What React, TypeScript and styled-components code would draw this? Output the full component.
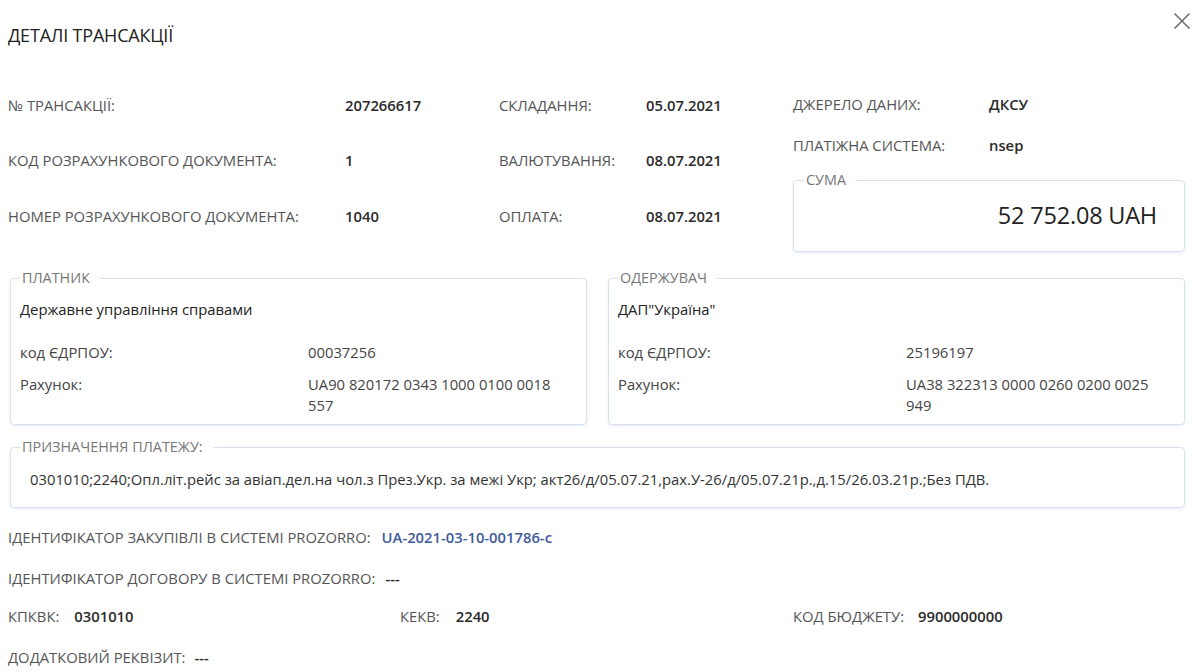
import React from 'react';
import styled, { createGlobalStyle } from 'styled-components';

const GlobalStyle = createGlobalStyle`
  html, body {
    margin: 0;
    padding: 0;
    background: #ffffff;
  }
  body {
    font-family: 'Open Sans', 'Noto Sans', sans-serif;
    font-size: 14.8px;
    color: #222222;
  }
`;

const Page = styled.div`
  width: 1200px;
  height: 672px;
  box-sizing: border-box;
  padding: 0 15px 0 8px;
  overflow: hidden;
`;

const Header = styled.header`
  display: flex;
  align-items: center;
  justify-content: space-between;
  height: 70px;
`;

const Title = styled.h1`
  margin: 0;
  font-size: 18px;
  font-weight: 400;
  color: #222222;
  letter-spacing: -0.2px;
`;

const CloseButton = styled.button`
  display: flex;
  align-items: center;
  justify-content: center;
  width: 20px;
  height: 20px;
  margin: -28px -7px 0 0;
  padding: 0;
  border: none;
  background: none;
  cursor: pointer;
  color: #707070;
`;

const TopSection = styled.div`
  display: flex;
  margin-top: 7px;
`;

const MainGrid = styled.div`
  display: grid;
  grid-template-columns: 491px 294px;
  grid-auto-rows: 55.5px;
  align-items: center;
`;

const Pair = styled.div<{ $labelWidth: number }>`
  display: grid;
  grid-template-columns: ${(p) => p.$labelWidth}px 1fr;
  align-items: center;
  line-height: 20px;
`;

const Label = styled.span`
  color: #555555;
  text-transform: uppercase;
  white-space: nowrap;
`;

const Value = styled.span`
  color: #2a2a2a;
  font-weight: 600;
`;

const SideColumn = styled.div`
  flex: 1;
  display: flex;
  flex-direction: column;
  padding-top: 17px;
  gap: 21px;
`;

const Box = styled.fieldset<{ $padX: number }>`
  margin: 0;
  padding: 0 ${(p) => p.$padX}px;
  border: 1px solid #d8e1ef;
  border-radius: 4px;
  box-shadow: 0 1px 3px rgba(80, 110, 160, 0.12);
  min-width: 0;
`;

const Legend = styled.legend<{ $shift: number }>`
  margin-left: ${(p) => p.$shift}px;
  padding: 0 10px 0 2px;
  font-size: 14.4px;
  line-height: 20px;
  color: #777777;
  text-transform: uppercase;
`;

const SumBox = styled(Box)`
  margin-top: -6px;
`;

const SumText = styled.div`
  margin-top: 10px;
  padding: 0 17px 21px 0;
  text-align: right;
  font-size: 23.5px;
  line-height: 30px;
  color: #222222;
  letter-spacing: -0.2px;
`;

const PartiesRow = styled.div`
  display: grid;
  grid-template-columns: 1fr 1fr;
  gap: 21px;
  margin: 16px 0 0 2px;
`;

const PartyName = styled.div`
  margin-top: 11px;
  line-height: 20px;
  font-weight: 500;
  color: #222222;
`;

const PartyTable = styled.div`
  display: grid;
  grid-template-columns: 288px 262px;
  row-gap: 11px;
  margin: 23px 0 8px;
  line-height: 21px;
  color: #444444;
`;

const PurposeBox = styled(Box)`
  margin: 12px 0 0 2px;
`;

const PurposeText = styled.div`
  padding: 12px 0 18px;
  line-height: 20px;
  color: #333333;
`;

const InfoRow = styled.div<{ $top: number; $gap: number }>`
  display: flex;
  align-items: center;
  gap: ${(p) => p.$gap}px;
  margin-top: ${(p) => p.$top}px;
  line-height: 20px;
`;

const InfoGrid = styled.div<{ $top: number }>`
  display: grid;
  grid-template-columns: 392px 393px 1fr;
  margin-top: ${(p) => p.$top}px;
  line-height: 20px;
`;

const InfoCell = styled.div<{ $gap: number }>`
  display: flex;
  align-items: center;
  gap: ${(p) => p.$gap}px;
`;

const Link = styled.a`
  color: #3f5b9b;
  font-weight: 600;
  text-decoration: none;
`;

const CloseIcon = () => (
  <svg width="18" height="18" viewBox="0 0 18 18" fill="none" stroke="currentColor" strokeWidth="1.6">
    <path d="M1.5 1.5 L16.5 16.5 M16.5 1.5 L1.5 16.5" />
  </svg>
);

const parties = [
  {
    title: 'Платник',
    name: 'Державне управління справами',
    code: '00037256',
    account: 'UA90 820172 0343 1000 0100 0018 557',
  },
  {
    title: 'Одержувач',
    name: 'ДАП"Україна"',
    code: '25196197',
    account: 'UA38 322313 0000 0260 0200 0025 949',
  },
];

export default function App() {
  return (
    <>
      <GlobalStyle />
      <Page>
        <Header>
          <Title>ДЕТАЛІ ТРАНСАКЦІЇ</Title>
          <CloseButton aria-label="close">
            <CloseIcon />
          </CloseButton>
        </Header>

        <TopSection>
          <MainGrid>
            <Pair $labelWidth={337}>
              <Label>№ трансакції:</Label>
              <Value>207266617</Value>
            </Pair>
            <Pair $labelWidth={147}>
              <Label>Складання:</Label>
              <Value>05.07.2021</Value>
            </Pair>
            <Pair $labelWidth={337}>
              <Label>Код розрахункового документа:</Label>
              <Value>1</Value>
            </Pair>
            <Pair $labelWidth={147}>
              <Label>Валютування:</Label>
              <Value>08.07.2021</Value>
            </Pair>
            <Pair $labelWidth={337}>
              <Label>Номер розрахункового документа:</Label>
              <Value>1040</Value>
            </Pair>
            <Pair $labelWidth={147}>
              <Label>Оплата:</Label>
              <Value>08.07.2021</Value>
            </Pair>
          </MainGrid>

          <SideColumn>
            <Pair $labelWidth={196}>
              <Label>Джерело даних:</Label>
              <Value>ДКСУ</Value>
            </Pair>
            <Pair $labelWidth={196}>
              <Label>Платіжна система:</Label>
              <Value>nsep</Value>
            </Pair>
            <SumBox $padX={10}>
              <Legend $shift={0}>Сума</Legend>
              <SumText>52 752.08 UAH</SumText>
            </SumBox>
          </SideColumn>
        </TopSection>

        <PartiesRow>
          {parties.map((p) => (
            <Box key={p.title} $padX={9}>
              <Legend $shift={0}>{p.title}</Legend>
              <PartyName>{p.name}</PartyName>
              <PartyTable>
                <span>код ЄДРПОУ:</span>
                <span>{p.code}</span>
                <span>Рахунок:</span>
                <span>{p.account}</span>
              </PartyTable>
            </Box>
          ))}
        </PartiesRow>

        <PurposeBox $padX={19}>
          <Legend $shift={-10}>Призначення платежу:</Legend>
          <PurposeText>
            0301010;2240;Опл.літ.рейс за авіап.дел.на чол.з През.Укр. за межі Укр; акт26/д/05.07.21,рах.У-26/д/05.07.21р.,д.15/26.03.21р.;Без ПДВ.
          </PurposeText>
        </PurposeBox>

        <InfoRow $top={19} $gap={11}>
          <Label>Ідентифікатор закупівлі в системі Prozorro:</Label>
          <Link href="#">UA-2021-03-10-001786-c</Link>
        </InfoRow>
        <InfoRow $top={21} $gap={10}>
          <Label>Ідентифікатор договору в системі Prozorro:</Label>
          <Value>---</Value>
        </InfoRow>
        <InfoGrid $top={18}>
          <InfoCell $gap={15}>
            <Label>КПКВК:</Label>
            <Value>0301010</Value>
          </InfoCell>
          <InfoCell $gap={16}>
            <Label>КЕКВ:</Label>
            <Value>2240</Value>
          </InfoCell>
          <InfoCell $gap={14}>
            <Label>Код бюджету:</Label>
            <Value>9900000000</Value>
          </InfoCell>
        </InfoGrid>
        <InfoRow $top={21} $gap={9}>
          <Label>Додатковий реквізит:</Label>
          <Value>---</Value>
        </InfoRow>
      </Page>
    </>
  );
}
